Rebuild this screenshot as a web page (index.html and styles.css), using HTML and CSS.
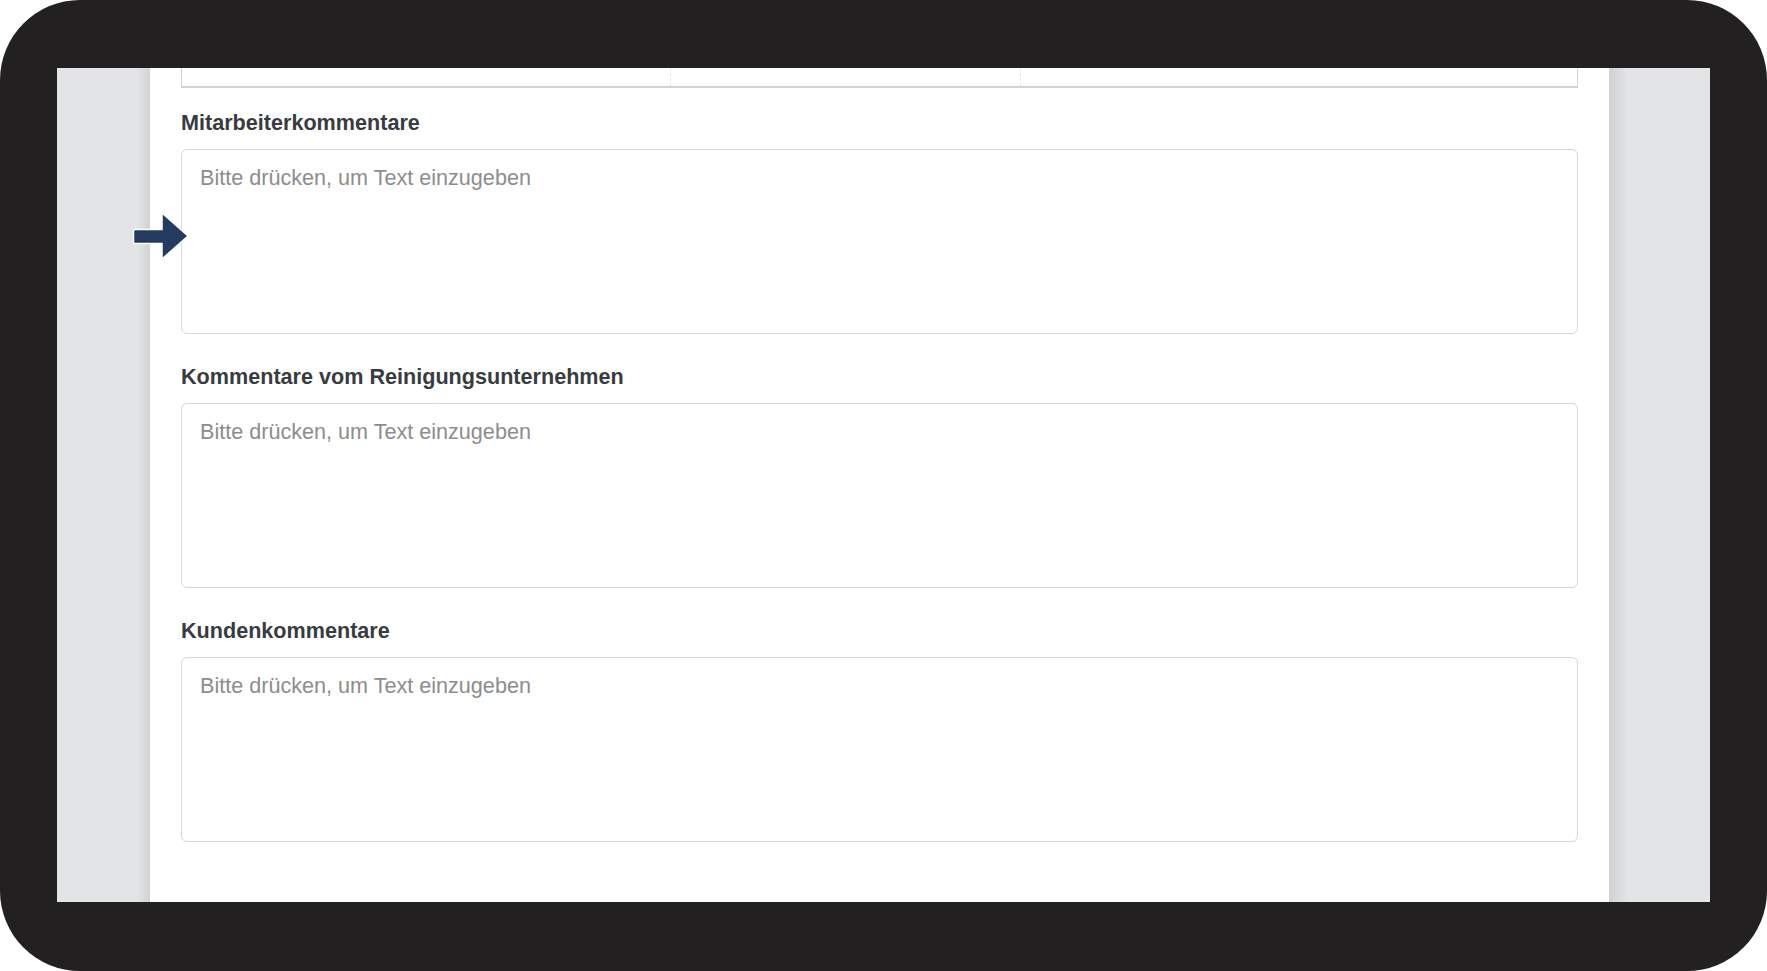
FILE: index.html
```html
<!DOCTYPE html>
<html lang="de">
<head>
  <meta charset="utf-8">
  <title>Kommentare</title>
  <meta name="viewport" content="width=device-width, initial-scale=1">
  <link rel="stylesheet" href="styles.css">
</head>
<body>

<div class="device">
  <div class="screen">
    <div class="side side-left"></div>

    <div class="page">
      <!-- Ende der Tabelle darüber -->
      <table class="info-table">
        <tr>
          <td class="col-a"></td>
          <td class="col-b"></td>
          <td class="col-c"></td>
        </tr>
      </table>

      <div class="field">
        <label for="staffComment">Mitarbeiterkommentare</label>
        <textarea id="staffComment" placeholder="Bitte drücken, um Text einzugeben"></textarea>
        <!-- Hinweispfeil -->
        <svg class="hint-arrow" width="58" height="50" viewBox="0 0 58 50" aria-hidden="true">
          <path d="M3 18.5 H30 V2 L56 25 L30 48 V32.5 H3 Q1.5 32.5 1.5 31 V20 Q1.5 18.5 3 18.5 Z"
                fill="#243b5f" stroke="#ffffff" stroke-width="1.5" stroke-linejoin="round"/>
        </svg>
      </div>

      <div class="field">
        <label for="cleanerComment">Kommentare vom Reinigungsunternehmen</label>
        <textarea id="cleanerComment" placeholder="Bitte drücken, um Text einzugeben"></textarea>
      </div>

      <div class="field">
        <label for="customerComment">Kundenkommentare</label>
        <textarea id="customerComment" placeholder="Bitte drücken, um Text einzugeben"></textarea>
      </div>
    </div>

    <div class="side side-right"></div>
  </div>
</div>

</body>
</html>
```

FILE: styles.css
```css
/* Grundlayout */
body {
  margin: 0;
  padding: 0;
  background-color: #fff;
  font-family: "Liberation Sans", Arial, Helvetica, sans-serif;
}

/* dunkler Geräterahmen */
.device {
  width: 1767px;
  height: 971px;
  box-sizing: border-box;
  padding: 68px 57px 69px 57px;
  background-color: #222021;
  border-radius: 80px;
}

.screen {
  height: 100%;
  display: grid;
  grid-template-columns: 93px 1459px 101px;
  overflow: hidden;
  background-color: #e3e4e6;
}

.side-left {
  background: linear-gradient(to right, #e3e4e6 0, #e3e4e6 80px, #d1d2d4 93px);
}

.side-right {
  background: linear-gradient(to right, #d0d1d3 0, #e3e4e6 18px, #e3e4e6 100%);
}

.page {
  background-color: #fff;
  padding: 0 31px;
}

/* Tabelle oben */
.info-table {
  width: 100%;
  border-collapse: collapse;
  margin-bottom: 22px;
}

.info-table td {
  height: 18px;
  padding: 0;
  border-bottom: 2px solid #d3d3d3;
}

.info-table .col-a {
  width: 488px;
  border-left: 1.5px solid #d3d3d3;
  border-right: 1px dashed #e6e6e6;
}

.info-table .col-b {
  width: 349px;
  border-right: 1px dashed #e6e6e6;
}

.info-table .col-c {
  border-right: 1.5px solid #d3d3d3;
}

/* Kommentarfelder */
.field {
  position: relative;
  margin-bottom: 30px;
}

.field label {
  display: block;
  font-size: 21.6px;
  line-height: 26px;
  font-weight: bold;
  color: #383b3f;
  margin-bottom: 13px;
}

.field textarea {
  display: block;
  width: 100%;
  height: 185px;
  box-sizing: border-box;
  padding: 15px 18px;
  border: 1.5px solid #d6d6d6;
  border-radius: 6px;
  resize: none;
  outline: none;
  font-family: "Liberation Sans", Arial, Helvetica, sans-serif;
  font-size: 21.6px;
  line-height: 26px;
  color: #333;
  background-color: #fff;
}

.field textarea::placeholder {
  color: #8d8d8d;
}

.hint-arrow {
  position: absolute;
  left: -49px;
  top: 101px;
}
```
